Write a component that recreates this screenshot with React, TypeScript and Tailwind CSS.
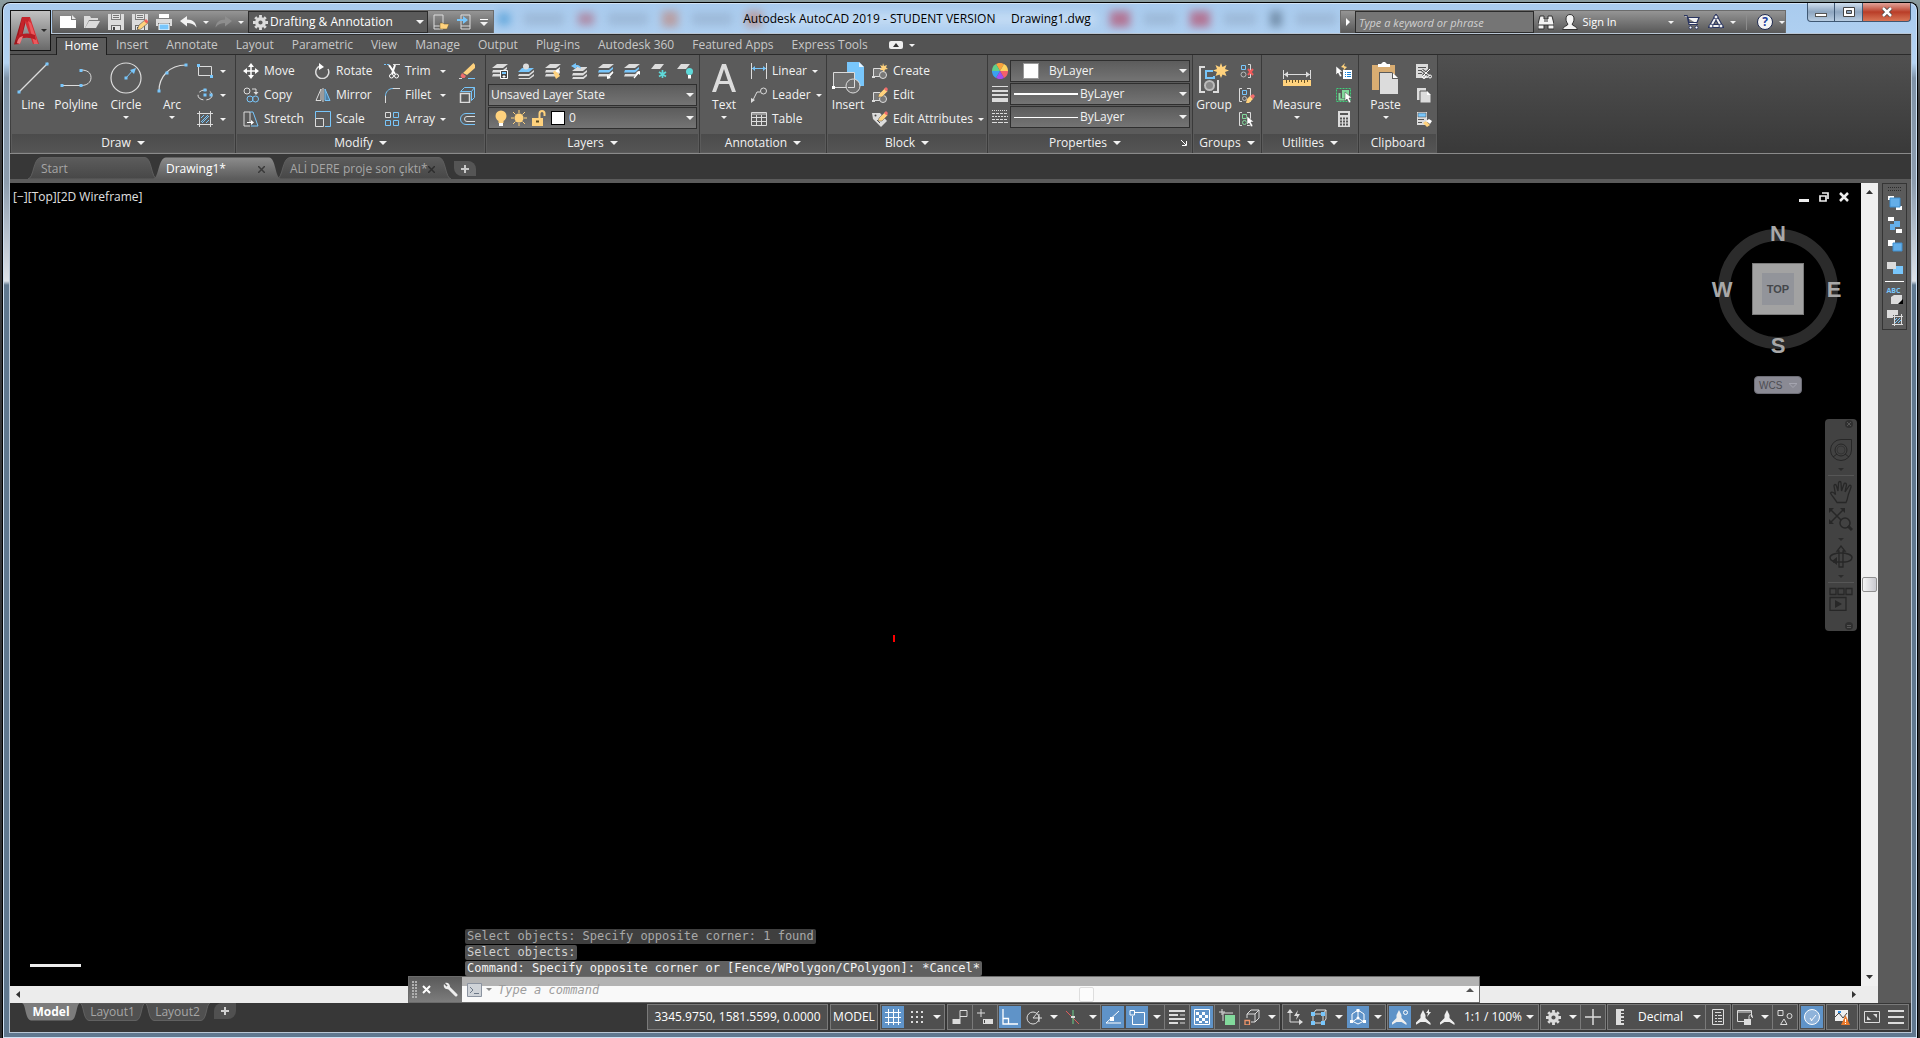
import { FC, ReactNode } from "react";

interface IconProps {
  w?: number;
  h?: number;
  children: ReactNode;
}

const Icon: FC<IconProps> = ({ w = 16, h = w, children }) => (
  <svg
    width={w}
    height={h}
    viewBox={`0 0 ${w} ${h}`}
    fill="none"
    className="shrink-0"
    aria-hidden="true"
  >
    {children}
  </svg>
);

const W = "#dcdcdc";
const B = "#78c6fb";
const Y = "#ffd27d";
const G = "#82d99c";

const Caret: FC<{ big?: boolean; dark?: boolean }> = ({ big, dark }) => (
  <svg
    width={big ? 8 : 6}
    height={big ? 4 : 3}
    viewBox="0 0 8 4"
    className="shrink-0"
    aria-hidden="true"
  >
    <path d="M0 0h8L4 4z" fill={dark ? "#2b2b2b" : "#f2f2f2"} />
  </svg>
);

/* ---------- quick access icons ---------- */

const NewIcon = () => (
  <Icon>
    <path d="M0 2h11v4h5v8H0z" fill="#fff" />
    <path d="M12 1l4 4h-4z" fill="#e8e8e8" />
  </Icon>
);

const OpenIcon = () => (
  <Icon>
    <path d="M0 14V2h6l1 2h7v2H5L1 14z" fill={W} />
    <path d="M5 7h11l-4 7H1z" fill={W} />
  </Icon>
);

const SaveIcon: FC<{ pen?: boolean }> = ({ pen }) => (
  <Icon>
    <path d="M0 0h3v6h10V0h3v16h-3v-5H3v5H0z" fill={W} />
    <path d="M4 0h8v5H4zM4 12h8v4H4z" fill="#e4e4e4" />
    <path d="M5 1.500h6M5 3.500h6" stroke="#777" />
    <path d="M5 13h2v3H5z" fill="#444" />
    {pen && (
      <>
        <path d="M5 16l2-5 6-5 3 3-7 6z" fill={Y} stroke="#555" strokeWidth=".6" />
        <path d="M12 7l2-2 2.500 2.500-2 2z" fill="#f0605a" />
      </>
    )}
  </Icon>
);

const PrintIcon = () => (
  <Icon>
    <path d="M3 0h10v4H3z" fill="#fff" />
    <path d="M0 5h16v7h-2V9H2v3H0z" fill={W} />
    <path d="M3 10h10v6H3z" fill={B} stroke="#fff" />
  </Icon>
);

const UndoIcon: FC<{ redo?: boolean }> = ({ redo }) => (
  <Icon w={17} h={12}>
    <g
      fill={redo ? "#8e8e8e" : "#f2f2f2"}
      transform={redo ? "matrix(-1 0 0 1 17 0)" : undefined}
    >
      <path d="M0 5l7-5v3.500c6 0 9 3 9.500 8C14 8 11 7 7 7v3.500z" />
    </g>
  </Icon>
);

const GearIcon: FC<{ size?: number }> = ({ size = 15 }) => (
  <svg width={size} height={size} viewBox="-8 -8 16 16" aria-hidden="true">
    <circle r="4" fill="none" stroke={W} strokeWidth="3.500" />
    <path
      d="M0-8v3M0 8V5M-8 0h3M8 0H5M-5.600-5.600l2 2M5.600 5.600l-2-2M-5.600 5.600l2-2M5.600-5.600l-2 2"
      stroke={W}
      strokeWidth="3"
    />
  </svg>
);

const MobileOpenIcon = () => (
  <Icon>
    <path d="M1 1h9v14H1z" stroke={W} />
    <path d="M1 12h9" stroke={W} />
    <path d="M7 15V9h3l1 1h5l-2 5z" fill={Y} stroke="#6a5a30" strokeWidth=".5" />
  </Icon>
);

const MobileShareIcon = () => (
  <Icon>
    <path d="M4 1h9v14H4z" stroke={W} />
    <path d="M4 12h9" stroke={W} />
    <path d="M0 5h6V2l5 4-5 4V7H0z" fill={B} />
  </Icon>
);

/* ---------- draw ---------- */

const Dot: FC<{ x: number; y: number }> = ({ x, y }) => (
  <rect x={x - 1.5} y={y - 1.5} width="3" height="3" fill={B} />
);

const LineIcon = () => (
  <Icon w={32}>
    <path d="M2 30L31 1" stroke={W} strokeWidth="1.200" />
    <Dot x={2} y={30} />
    <Dot x={30} y={2} />
  </Icon>
);

const PolylineIcon = () => (
  <Icon w={32}>
    <path d="M2 23.500h19c6 0 10-3 10-8s-4-7.500-10-7.500" stroke={W} />
    <Dot x={2} y={23.5} />
    <Dot x={21} y={23.5} />
    <Dot x={21} y={8.5} />
  </Icon>
);

const CircleIcon = () => (
  <Icon w={32}>
    <circle cx="16" cy="16" r="15" stroke={W} strokeWidth="1.200" />
    <path d="M16 16l8-9" stroke={B} />
    <path d="M26 6l-6 2 4 4z" fill={B} />
    <Dot x={16} y={16} />
  </Icon>
);

const ArcIcon = () => (
  <Icon w={32}>
    <path d="M3 29C3 15 13 3 30 3" stroke={W} strokeWidth="1.200" />
    <Dot x={3} y={29} />
    <Dot x={11} y={11} />
    <Dot x={30} y={3} />
  </Icon>
);

const RectIcon = () => (
  <Icon>
    <path d="M1.500 3.500h13v9h-13z" stroke={W} />
    <Dot x={1.5} y={2.5} />
    <Dot x={14.5} y={13.5} />
  </Icon>
);

const EllipseIcon = () => (
  <Icon>
    <ellipse cx="8" cy="8" rx="7" ry="5" stroke={W} strokeDasharray="8 3" />
    <Dot x={8} y={8} />
    <Dot x={14} y={8} />
    <Dot x={8} y={3} />
  </Icon>
);

const HatchIcon = () => (
  <Icon>
    <path d="M2.500 0v16M13.500 0v16M0 2.500h16M0 13.500h16" stroke={W} />
    <path d="M4 7l3-3M4 11l7-7M5 12l7-7M9 12l3-3" stroke={B} />
  </Icon>
);

/* ---------- modify ---------- */

const MoveIcon = () => (
  <Icon>
    <path d="M8 2v12M2 8h12" stroke="#fff" strokeWidth="1.500" />
    <path d="M8 0l3 4H5zM8 16l3-4H5zM0 8l4-3v6zM16 8l-4-3v6z" fill="#fff" />
  </Icon>
);

const CopyIcon = () => (
  <Icon>
    <circle cx="4" cy="4" r="3" stroke={W} />
    <path d="M9 2h4v4" stroke={W} />
    <path d="M13 8l-2.500-3h5z" fill={W} />
    <circle cx="7" cy="12" r="3" stroke={B} />
    <circle cx="12.500" cy="12" r="3" stroke={B} />
  </Icon>
);

const StretchIcon = () => (
  <Icon>
    <path d="M7 11V1H1v14h6" stroke={W} />
    <path d="M7 1h3l5 14H8" stroke={B} />
    <path d="M4 11.500h6" stroke="#fff" />
    <path d="M11 11.500L8 9v5z" fill="#fff" />
  </Icon>
);

const RotateIcon = () => (
  <Icon>
    <path d="M5 3a6.500 6.500 0 1 0 8 3" stroke={W} strokeWidth="1.500" />
    <path d="M4 0l5 4-5 3z" fill="#fff" />
  </Icon>
);

const MirrorIcon = () => (
  <Icon>
    <path d="M6 2v11.500H1z" stroke={W} />
    <path d="M10 2v11.500h5z" stroke={B} fill="#4d7fa5" />
    <path d="M8 1v14" stroke={W} />
  </Icon>
);

const ScaleIcon = () => (
  <Icon>
    <path d="M.500 7V.500h15v15H10" stroke={B} />
    <path d="M.500 7.500h8v8h-8z" stroke={W} />
  </Icon>
);

const TrimIcon = () => (
  <Icon>
    <path d="M0 1.500h6" stroke={B} strokeDasharray="2 1" />
    <path d="M9 1.500h7" stroke={W} />
    <path d="M5 2l6 9M11 2l-3 9" stroke="#fff" strokeWidth="2" />
    <circle cx="7.500" cy="13" r="2" stroke="#fff" />
    <circle cx="12.500" cy="13" r="2" stroke="#fff" />
  </Icon>
);

const FilletIcon = () => (
  <Icon>
    <path d="M9 1.500h7M1.500 9v7" stroke={W} />
    <path d="M1.500 9c0-4 3-7.500 7.500-7.500" stroke={B} />
  </Icon>
);

const ArrayIcon = () => (
  <Icon>
    <path d="M1.500 1.500h5v5h-5z" stroke={W} />
    <path d="M9.500 1.500h5v5h-5zM1.500 9.500h5v5h-5zM9.500 9.500h5v5h-5z" stroke={B} />
  </Icon>
);

const EraseIcon = () => (
  <Icon>
    <path d="M14.500 0l1.500 2v3l-8 7-4-2z" fill={Y} />
    <path d="M3 10l4 3-1.500 2H3l-1.500-2z" fill="#f26d6d" />
    <path d="M9 15.500h7" stroke={B} />
    <path d="M0 15.500h3" stroke={W} />
  </Icon>
);

const ExplodeIcon = () => (
  <Icon>
    <path d="M1.500 6.500h9v9h-9z" stroke={W} strokeWidth="1.500" />
    <path d="M1.500 4.500l4-4h10v10l-3 3M1.500 4.500h11l3-4M12.500 4.500v9" stroke={B} />
  </Icon>
);

const OffsetIcon = () => (
  <Icon>
    <path d="M16 2.500H7a5.500 5.500 0 0 0 0 11h9" stroke={B} />
    <path d="M16 5.500H8a2.500 2.500 0 0 0 0 5h8" stroke={W} />
  </Icon>
);

/* ---------- layers ---------- */

const Stack: FC<{ top?: string; mid?: string }> = ({ top = W, mid = W }) => (
  <>
    <path d="M5 1h11l-5 4H0z" fill={top} />
    <path d="M1 7h10l4-3v2l-4 3.500H0z" fill={mid} />
    <path d="M1 11h10l4-3v2l-4 3.500H0z" fill={W} />
  </>
);

const LayerPropsIcon = () => (
  <Icon>
    <Stack />
    <path d="M8.500 7.500h7v8h-7z" fill="#444" stroke="#fff" />
    <path d="M10 9h4v2h-4z" fill={B} />
    <path d="M12 12v3M10.500 13.500h3" stroke="#fff" />
  </Icon>
);

const LayerMakeIcon = () => (
  <Icon>
    <path d="M4 5h12l-5 4H0z" fill={B} />
    <path d="M1 11h10l5-4v2l-5 4H0zM1 15h10l5-4v2l-5 3.500H0z" fill={W} />
    <circle cx="8" cy="3.500" r="3" fill={W} />
  </Icon>
);

const LayerMatchIcon = () => (
  <Icon>
    <Stack />
    <path d="M8 9l3-2 4 6-4 3z" fill={Y} />
    <path d="M10 8l3-2 2 2-2 2z" fill="#fff" />
  </Icon>
);

const LayerPrevIcon = () => (
  <Icon>
    <g transform="translate(1 3)">
      <Stack />
    </g>
    <path d="M0 3l5-3v2c4 0 5 2 5 4-1-1.500-3-2-5-2v2z" fill={B} />
  </Icon>
);

const LayerArrowIcon: FC<{ up?: boolean }> = ({ up }) => (
  <Icon>
    <Stack mid={B} />
    <path d="M15 9l-5 6" stroke="#fff" strokeWidth="1.200" />
    <path d={up ? "M16 8v4l-4-3z" : "M9 16v-4l4 3z"} fill="#fff" />
  </Icon>
);

const LayerFreezeIcon = () => (
  <Icon>
    <path d="M4 1h9L9 6H0z" fill={W} />
    <path d="M11.500 7v8M8 9l7 4.500M15 9l-7 4.500" stroke="#5fd9d9" strokeWidth="1.700" />
  </Icon>
);

const LayerOffIcon = () => (
  <Icon>
    <path d="M4 1h9L9 6H0z" fill={W} />
    <circle cx="12.500" cy="8.500" r="3.500" fill="#5fd9d9" />
    <path d="M11 12h3v3.500h-3z" fill="#fff" />
  </Icon>
);

const BulbIcon = () => (
  <Icon w={12} h={16}>
    <circle cx="6" cy="6" r="5.500" fill={Y} />
    <path d="M3.500 11h5v2h-5z" fill={Y} />
    <path d="M4 13h4v3H4z" fill="#fff" />
  </Icon>
);

const SunIcon = () => (
  <Icon>
    <circle cx="8" cy="8" r="4.500" fill={Y} />
    <path
      d="M8 0v3M8 13v3M0 8h3M13 8h3M2 2l2.500 2.500M14 14l-2.500-2.500M2 14l2.500-2.500M14 2l-2.500 2.500"
      stroke={Y}
    />
  </Icon>
);

const UnlockIcon = () => (
  <Icon>
    <path d="M1 8h11v8H1z" fill={Y} />
    <path d="M8.500 8V3.500a2.500 2.500 0 0 1 5 0V6" stroke={Y} strokeWidth="2" />
    <path d="M5 10.500h3v2H5z" fill="#5b4a20" />
  </Icon>
);

/* ---------- annotation, block ---------- */

const LinearIcon = () => (
  <Icon>
    <path d="M.500 0v16M15.500 0v16" stroke={W} />
    <path d="M1 5.500h14" stroke={B} />
    <path d="M1 5.500L4 3v5zM15 5.500L12 3v5z" fill={B} />
  </Icon>
);

const LeaderIcon = () => (
  <Icon>
    <circle cx="12.500" cy="4" r="3" stroke={W} />
    <path d="M9 5H6L2 13" stroke={W} />
    <path d="M0 16v-5l4 2z" fill={W} />
  </Icon>
);

const TableIcon = () => (
  <Icon>
    <path d="M.500 1.500h15v13H.500z" stroke={W} />
    <path d="M0 3h16M0 6.500h16M0 10.500h16M5.500 4v11M10.500 4v11" stroke={W} />
  </Icon>
);

const InsertIcon = () => (
  <Icon w={32}>
    <path d="M15 0h12l5 5v19H15z" fill={B} />
    <path d="M27 0l5 5h-5z" fill="#e6f4ff" />
    <path d="M1.500 10.500h21v15h-21z" fill="#6e6e6e" stroke={W} />
    <circle cx="21" cy="24" r="7" fill="#6e6e6e" stroke={W} />
    <path d="M22.500 18v7.500H16" stroke={W} />
    <path d="M0 24h3v3H0z" fill="#fff" />
  </Icon>
);

const Pencil = () => (
  <>
    <path d="M6 10l1-3 6-6 3 3-6 6z" fill={Y} stroke="#5b5b5b" strokeWidth=".5" />
    <path d="M12 2l2-2 2 2-1.500 2.500z" fill="#f26d6d" />
  </>
);

const BlockBase = () => (
  <>
    <path d="M1.500 5.500h10v8h-10z" fill="#777" stroke={W} />
    <circle cx="11" cy="12" r="3.500" fill="#777" stroke={W} />
    <path d="M0 13h3v2H0z" fill={W} />
  </>
);

const BlockCreateIcon = () => (
  <Icon>
    <BlockBase />
    <path d="M11 0l1 3 3-1-1 2.500 2 1.500-3 .500-1 2.500-1.500-2L8 7l1.500-2.500L8 2l2.500 1z" fill={Y} />
  </Icon>
);

const BlockEditIcon = () => (
  <Icon>
    <BlockBase />
    <Pencil />
  </Icon>
);

const AttrEditIcon = () => (
  <Icon>
    <path d="M0 2h8l7 8-6 6-8-8z" fill={W} />
    <circle cx="3.500" cy="4.500" r="1" fill="#444" />
    <path d="M5 9l3 3" stroke="#555" />
    <Pencil />
  </Icon>
);

/* ---------- properties ---------- */

const ColorWheelIcon = () => (
  <svg width="16" height="16" viewBox="-8 -8 16 16" aria-hidden="true">
    <path d="M0 0L-4-7a8 8 0 0 1 8 0z" fill="#f9a13c" />
    <path d="M0 0L4-7a8 8 0 0 1 4 7z" fill="#ffd25e" />
    <path d="M0 0h8a8 8 0 0 1-4 7z" fill="#f4606c" />
    <path d="M0 0l4 7a8 8 0 0 1-8 0z" fill="#a14df0" />
    <path d="M0 0l-4 7a8 8 0 0 1-4-7z" fill="#3aa0f0" />
    <path d="M0 0h-8a8 8 0 0 1 4-7z" fill="#5fd08b" />
  </svg>
);

const LineWeightIcon = () => (
  <Icon>
    <path d="M0 0h16v1H0zM0 4h16v2H0zM0 8h16v2H0zM0 12h16v4H0z" fill={W} />
  </Icon>
);

const LineTypeIcon = () => (
  <Icon>
    <path d="M0 1.500h16" stroke={W} strokeDasharray="1 1" />
    <path d="M0 4.500h16M0 10.500h16" stroke={W} strokeDasharray="3 1" />
    <path d="M0 7.500h16" stroke={W} strokeDasharray="2 1" />
    <path d="M0 13.500h16" stroke={W} strokeDasharray="5 1" />
  </Icon>
);

/* ---------- groups, utilities, clipboard ---------- */

const GroupIcon = () => (
  <Icon w={32}>
    <path d="M7 5H2v25h5M15 30h5V18" stroke={W} strokeWidth="2" />
    <path d="M15 9H8v7h8v-2" stroke={B} strokeWidth="2" />
    <circle cx="11.500" cy="23.500" r="4.500" fill="#888" stroke="#bbb" strokeWidth="2" />
    <path
      d="M23 1l1.500 4 4-2-1.500 4 4 1.500-4 1.500 1.500 4-4-1.500L23 16l-1.500-3.500-4 1.500 1.500-4-4-1.500 4-1.500-1.500-4 4 2z"
      fill={Y}
    />
  </Icon>
);

const GroupBase: FC<{ color?: string }> = ({ color = B }) => (
  <>
    <path d="M3 1.500H.500v13H3M8 1.500h3.500v13H8" stroke={W} />
    <path d="M3.500 3.500h4v4h-4z" stroke={color} />
    <circle cx="5.500" cy="11.500" r="2" stroke={color === G ? G : "#bbb"} />
  </>
);

const UngroupIcon = () => (
  <Icon>
    <path d="M9 1.500h2.500v13H9" stroke={W} />
    <path d="M2.500 2.500h4v4h-4z" stroke={B} />
    <circle cx="4.500" cy="11.500" r="2.500" stroke="#bbb" />
    <path d="M9 6l5 6M14 6l-5 6" stroke="#f05a5a" strokeWidth="2" />
  </Icon>
);

const GroupEditIcon = () => (
  <Icon>
    <GroupBase />
    <path d="M7 16l1-4 3-3 3 3-4 4z" fill={Y} />
    <path d="M11 9l3-2 2 2-2 3z" fill="#f26d6d" />
  </Icon>
);

const Pointer: FC<{ x: number; y: number }> = ({ x, y }) => (
  <path
    d="M0 0v9l2-2 2 4 2-1-2-4h3z"
    transform={`translate(${x} ${y})`}
    fill="#fff"
    stroke="#444"
    strokeWidth=".5"
  />
);

const GroupSelectIcon = () => (
  <Icon>
    <GroupBase color={G} />
    <Pointer x={8} y={5} />
  </Icon>
);

const MeasureIcon = () => (
  <Icon w={32}>
    <path d="M2.500 8v9M29.500 8v9M3 12.500h26" stroke={W} />
    <path d="M3 12.500l4-3v6zM29 12.500l-4-3v6z" fill={W} />
    <path d="M2 18h28v6H2z" fill={Y} />
    <path
      d="M5.500 18v3M8.500 18v2M11.500 18v3M14.500 18v2M17.500 18v3M20.500 18v2M23.500 18v3M26.500 18v2"
      stroke="#6a5426"
    />
  </Icon>
);

const QuickSelectIcon = () => (
  <Icon>
    <path d="M9 0L5 4l3 1-1 3 4-4-3-1z" fill={Y} />
    <path d="M7 7h9v9H7z" fill="#fff" />
    <path d="M9 9.500h1M11 9.500h4M9 11.500h1M11 11.500h4M9 13.500h1M11 13.500h4" stroke="#1b84d8" />
    <Pointer x={0} y={3} />
  </Icon>
);

const SelectAllIcon = () => (
  <Icon>
    <path d="M.500 1.500h14v13H.500z" stroke="#3fd07a" strokeDasharray="2 1" />
    <path d="M3.500 6v6.500h6" stroke={G} strokeWidth="2" />
    <path d="M6 3h7v8H6z" fill={G} />
    <Pointer x={9} y={5} />
  </Icon>
);

const CalcIcon = () => (
  <Icon>
    <path d="M2 0h12v16H2z" fill={W} />
    <path d="M4 2h8v2H4z" fill="#555" />
    <path d="M4 7.500h8M4 10.500h8M4 13.500h8" stroke="#555" strokeWidth="2" strokeDasharray="2 1" />
  </Icon>
);

const PasteIcon = () => (
  <Icon w={32}>
    <path d="M2 3h23v25H2z" fill="#d9ad72" />
    <path d="M8 2h3l2-2h2l2 2h3v3H8z" fill="#fff" />
    <path d="M9 10h13l6 6v16H9z" fill="#5b5b5b" />
    <path d="M10 11h12v6h6v15H10z" fill={W} />
    <path d="M23 11l5 5h-5z" fill="#fff" />
  </Icon>
);

const CutIcon = () => (
  <Icon>
    <path d="M0 1h12v14H0z" fill={W} />
    <path d="M2 4.500h8M2 7.500h5M2 10.500h4" stroke="#555" />
    <path d="M6 7l8 6M14 6l-7 7" stroke="#5b5b5b" strokeWidth="3" />
    <path d="M6 7l8 6M14 6l-7 7" stroke="#fff" />
    <circle cx="8" cy="14" r="1.500" stroke="#fff" />
    <circle cx="14" cy="13.500" r="1.500" stroke="#fff" />
  </Icon>
);

const CopyClipIcon = () => (
  <Icon>
    <path d="M1 1h9v12H1z" fill={W} />
    <path d="M4 4h7l4 4v8H4z" fill={W} stroke="#5b5b5b" />
    <path d="M11 4v4h4z" fill="#fff" />
  </Icon>
);

const MatchPropsIcon = () => (
  <Icon>
    <path d="M1 1h10v13H1z" fill={W} />
    <path d="M2 2h8v4H2z" fill={B} stroke="#444" strokeWidth=".5" />
    <path d="M2 8.500h6M2 11.500h4" stroke="#555" />
    <path d="M7 12l3-2 4 4-3 2z" fill={Y} />
    <path d="M10 10l3-2 3 2-2 3z" fill="#fff" />
  </Icon>
);

/* ---------- ribbon building blocks ---------- */

interface BigProps {
  icon: ReactNode;
  label: string;
  width: string;
  arrow?: boolean;
}

const BigButton: FC<BigProps> = ({ icon, label, width, arrow }) => (
  <button
    type="button"
    className={`flex h-full flex-col items-center pt-[7px] ${width}`}
  >
    {icon}
    <span className="mt-[3px] leading-4 whitespace-nowrap">{label}</span>
    {arrow && (
      <span className="flex h-2 items-center">
        <Caret />
      </span>
    )}
  </button>
);

interface SmallProps {
  icon: ReactNode;
  label?: string;
  name?: string;
  arrow?: boolean;
}

const SmallButton: FC<SmallProps> = ({ icon, label, name, arrow }) => (
  <button
    type="button"
    aria-label={label ? undefined : name}
    className="flex h-6 items-center gap-[5px] whitespace-nowrap"
  >
    {icon}
    {label}
    {arrow && (
      <span className="ml-auto">
        <Caret />
      </span>
    )}
  </button>
);

interface PanelProps {
  title: string;
  width: string;
  arrow?: boolean;
  launcher?: boolean;
  children: ReactNode;
}

const Panel: FC<PanelProps> = ({
  title,
  width,
  arrow = true,
  launcher,
  children,
}) => (
  <section
    className={`flex shrink-0 flex-col border-r border-r-[#3a3a3a] bg-[#5b5b5b] ${width}`}
  >
    <div className="flex h-[79px]">{children}</div>
    <div className="mx-px flex h-[18px] items-center bg-linear-to-b from-[#4b4b4b] to-[#545454]">
      <button type="button" className="flex flex-1 items-center justify-center gap-1.5">
        {title}
        {arrow && <Caret big />}
      </button>
      {launcher && (
        <button type="button" aria-label="Open palette" className="mr-1">
          <Icon w={6}>
            <path d="M0 0l5 5M5.500 1v4.500H1" stroke="#fff" />
          </Icon>
        </button>
      )}
    </div>
  </section>
);

interface ComboProps {
  label: string;
  value: string;
  pad: string;
  children?: ReactNode;
}

const Combo: FC<ComboProps> = ({ label, value, pad, children }) => (
  <div className="relative flex h-[22px] w-full items-center border border-[#2f2f2f] bg-linear-to-b from-[#5c5c5c] to-[#747474]">
    <div className="pointer-events-none absolute inset-y-0 left-0 flex items-center">
      {children}
    </div>
    <select
      aria-label={label}
      className={`h-full w-full appearance-none text-[#f2f2f2] ${pad}`}
    >
      <option>{value}</option>
    </select>
    <span className="pointer-events-none absolute right-[2px]">
      <Caret big />
    </span>
  </div>
);

/* ---------- title bar ---------- */

const AppButton = () => (
  <button
    type="button"
    aria-label="Application menu"
    className="absolute top-[7px] left-0 z-10 flex h-[41px] w-[41px] items-center justify-center gap-0.5 border border-[#151515] bg-linear-to-b from-[#c2c2c2] to-[#6a6a6a]"
  >
    <svg width="25" height="28" viewBox="0 0 25 28" aria-hidden="true">
      <path d="M8 0h5L6 27l-6 .500z" fill="#9c161c" />
      <path d="M10 0h6l9 27h-6L11 5z" fill="#d42f35" />
      <path d="M8 0h8l-2 5-3-1-5 22-3 1z" fill="#c4242a" />
      <path d="M14 4l3 2 7 21h-4z" fill="#ea5a5e" />
      <path d="M3 19c6-3 12-3 18-1l1 5c-6-3-12-3-20 0z" fill="#b51d24" />
      <path d="M3 26c1-4 2-6 6-7l-3 8z" fill="#ee7d80" />
    </svg>
    <Caret dark />
  </button>
);

const toolbar =
  "mt-[7px] flex h-[23px] items-center border border-b-0 border-[#6b6b6b] bg-linear-to-b from-[#959595] to-[#585858]";

const QuickAccess = () => (
  <div className={`${toolbar} ml-[42px] w-[442px] shrink-0 pl-[7px]`}>
    <div className="flex items-center gap-2">
      <button type="button" aria-label="New"><NewIcon /></button>
      <button type="button" aria-label="Open"><OpenIcon /></button>
      <button type="button" aria-label="Save"><SaveIcon /></button>
      <button type="button" aria-label="Save As"><SaveIcon pen /></button>
      <button type="button" aria-label="Plot"><PrintIcon /></button>
      <div className="flex items-center gap-1.5">
        <button type="button" aria-label="Undo"><UndoIcon /></button>
        <Caret />
        <button type="button" aria-label="Redo"><UndoIcon redo /></button>
        <Caret />
      </div>
    </div>
    <div className="relative ml-1 flex h-[22px] w-[180px] items-center border border-[#2b2b2b] bg-[#5a5a5a]">
      <span className="pointer-events-none absolute left-1">
        <GearIcon />
      </span>
      <select
        aria-label="Workspace"
        className="h-full w-full appearance-none pl-[21px] text-white"
      >
        <option>Drafting &amp; Annotation</option>
      </select>
      <span className="pointer-events-none absolute right-[3px]">
        <Caret big />
      </span>
    </div>
    <div className="flex flex-1 items-center justify-between px-[5px]">
      <button type="button" aria-label="Open from mobile"><MobileOpenIcon /></button>
      <button type="button" aria-label="Share to mobile"><MobileShareIcon /></button>
      <button
        type="button"
        aria-label="Customize"
        className="flex flex-col items-center gap-0.5"
      >
        <span className="h-px w-2 bg-white" />
        <Caret big />
      </button>
    </div>
  </div>
);

// colours of the windows that shine through the glass title bar
const Glass = () => (
  <div className="absolute inset-x-0 top-2 flex h-4 items-center justify-between px-1 opacity-50 blur-[4px]">
    <span className="h-3 w-3 bg-[#1d84c9]" />
    <span className="h-3 w-10 bg-[#8fa6c2]" />
    <span className="h-3 w-4 bg-[#b0475c]" />
    <span className="h-3 w-10 bg-[#8fa6c2]" />
    <span className="h-4 w-4 bg-[#c46f55]" />
    <span className="h-3 w-10 bg-[#8fa6c2]" />
    <span className="h-4 w-4 bg-[#c46f55]" />
    <span className="h-3 w-80 bg-[#dcebfa]" />
    <span className="h-4 w-5 bg-[#b81c3a]" />
    <span className="h-3 w-8 bg-[#8fa6c2]" />
    <span className="h-4 w-5 bg-[#b81c3a]" />
    <span className="h-3 w-8 bg-[#8fa6c2]" />
    <span className="h-4 w-3 bg-[#3d5368]" />
    <span className="h-3 w-10 bg-[#8fa6c2]" />
  </div>
);

const BinocularsIcon = () => (
  <Icon>
    <path d="M2 2h4v3h4V2h4l2 8v5h-6v-4H6v4H0v-5z" fill="#f4f4f4" stroke="#333" />
    <path d="M0 11h6M10 11h6M6 7h4" stroke="#333" />
  </Icon>
);

const UserIcon = () => (
  <Icon>
    <path
      d="M8 .500c3 0 4 2 4 4.500S11 9 10 10c0 2 5 2 5.500 5.500H.500C1 12 6 12 6 10 5 9 4 7.500 4 5S5 .500 8 .500z"
      fill="#f4f4f4"
      stroke="#333"
    />
  </Icon>
);

const CartIcon = () => (
  <Icon>
    <path d="M0 1.500h3l2 9h9M4 3.500h11l-2 5H5z" fill="#f4f4f4" stroke="#2a3560" strokeWidth="1.200" />
    <circle cx="6.500" cy="13.500" r="1.500" fill="#fff" stroke="#2a3560" />
    <circle cx="12.500" cy="13.500" r="1.500" fill="#fff" stroke="#2a3560" />
  </Icon>
);

const A360Icon = () => (
  <Icon>
    <path d="M8 3L3 12h10z" stroke="#2a3560" strokeWidth="4" />
    <path d="M8 3L3 12h10z" stroke="#f0f0f0" strokeWidth="2" />
    <circle cx="8" cy="3" r="2" fill="#f4f4f4" stroke="#2a3560" />
    <circle cx="3" cy="12" r="2" fill="#f4f4f4" stroke="#2a3560" />
    <circle cx="13" cy="12" r="2" fill="#f4f4f4" stroke="#2a3560" />
  </Icon>
);

const InfoCenter = () => (
  <div className={`${toolbar} w-[446px] shrink-0`}>
    <button type="button" aria-label="Collapse search" className="flex w-[14px] justify-center">
      <Icon w={4} h={8}>
        <path d="M0 0v8l4-4z" fill="#fff" />
      </Icon>
    </button>
    <input
      type="text"
      aria-label="Search"
      placeholder="Type a keyword or phrase"
      className="h-[22px] w-[180px] border border-[#2b2b2b] bg-[#757575] px-[3px] text-[11px] italic placeholder:text-[#d0d0d0]"
    />
    <button type="button" aria-label="Find" className="ml-1"><BinocularsIcon /></button>
    <button type="button" className="ml-2 flex w-28 items-center gap-1 text-[11px]">
      <UserIcon />
      Sign In
      <span className="ml-auto">
        <Caret />
      </span>
    </button>
    <button type="button" aria-label="App Store" className="ml-2.5"><CartIcon /></button>
    <button type="button" aria-label="Autodesk account" className="ml-2 flex items-center gap-1.5">
      <A360Icon />
      <Caret />
    </button>
    <span className="mx-2.5 h-4 w-px bg-[#8c8c8c]" />
    <button type="button" aria-label="Help" className="flex items-center gap-1.5">
      <span className="flex h-4 w-4 items-center justify-center rounded-full border border-[#1f2a50] bg-[#f4f4f4] text-[12px] leading-4 font-bold text-[#1c3f9e]">
        ?
      </span>
      <Caret />
    </button>
  </div>
);

const winButton =
  "flex h-[19px] items-center justify-center border border-t-0 border-[#3f5873]";

const TitleBar = () => (
  <header className="relative flex h-[31px] shrink-0 text-[12px]">
    <AppButton />
    <QuickAccess />
    <div className="relative flex min-w-0 flex-1 items-center justify-center overflow-hidden whitespace-pre text-black">
      <Glass />
      <span className="relative">
        Autodesk AutoCAD 2019 - STUDENT VERSION     Drawing1.dwg
      </span>
    </div>
    <InfoCenter />
    <div className="ml-[21px] flex shrink-0">
      <button
        type="button"
        aria-label="Minimize"
        className={`${winButton} w-7 rounded-bl bg-linear-to-b from-[#cfdfee] via-[#8ea6c0] to-[#b8cde2]`}
      >
        <span className="mt-1.5 h-1 w-3 border border-[#555] bg-white" />
      </button>
      <button
        type="button"
        aria-label="Maximize"
        className={`${winButton} w-7 border-l-0 bg-linear-to-b from-[#cfdfee] via-[#8ea6c0] to-[#b8cde2]`}
      >
        <Icon w={12} h={10}>
          <path d="M.500.500h11v9H.500z" fill="#fff" stroke="#444" />
          <path d="M3.500 3.500h5v3h-5z" fill="#8ea6c0" stroke="#444" />
        </Icon>
      </button>
      <button
        type="button"
        aria-label="Close"
        className={`${winButton} w-12 rounded-br border-l-0 bg-linear-to-b from-[#e0a39a] via-[#b93d28] to-[#d87556]`}
      >
        <Icon w={12} h={10}>
          <path d="M2 1l8 8M10 1L2 9" stroke="#444" strokeWidth="4" />
          <path d="M2 1l8 8M10 1L2 9" stroke="#fff" strokeWidth="2.500" />
        </Icon>
      </button>
    </div>
  </header>
);

/* ---------- ribbon ---------- */

const tabs = [
  "Insert",
  "Annotate",
  "Layout",
  "Parametric",
  "View",
  "Manage",
  "Output",
  "Plug-ins",
  "Autodesk 360",
  "Featured Apps",
  "Express Tools",
];

const RibbonTabs = () => (
  <nav className="flex h-[21px] shrink-0 items-end border-t border-b border-t-[#2b2b2b] border-b-[#2b2b2b] bg-[#535353] pl-[46px] text-[12px] text-[#c8c8c8]">
    <a
      href="#home"
      className="-mb-px flex h-[18px] w-[51px] items-center justify-center border border-b-0 border-[#1e1e1e] bg-[#5b5b5b] pb-0.5 text-white"
    >
      Home
    </a>
    {tabs.map((tab) => (
      <a
        key={tab}
        href="#ribbon"
        className="flex h-[18px] items-center px-[9px] whitespace-nowrap"
      >
        {tab}
      </a>
    ))}
    <button
      type="button"
      aria-label="Minimize ribbon"
      className="ml-3 flex h-[18px] items-center gap-1.5"
    >
      <span className="flex h-2 w-3.5 items-center justify-center rounded-xs bg-[#eee]">
        <svg width="6" height="4" viewBox="0 0 6 4" aria-hidden="true">
          <path d="M0 4l3-4 3 4z" fill="#333" />
        </svg>
      </span>
      <Caret />
    </button>
  </nav>
);

const Ribbon = () => (
  <div className="flex h-[99px] shrink-0 border-b border-b-[#8a8a8a] bg-linear-to-b from-[#505050] to-[#393939] pl-px text-[12px] text-[#f2f2f2]">
    <Panel title="Draw" width="w-[225px]">
      <BigButton icon={<LineIcon />} label="Line" width="w-11" />
      <BigButton icon={<PolylineIcon />} label="Polyline" width="w-[42px]" />
      <BigButton icon={<CircleIcon />} label="Circle" width="w-[58px]" arrow />
      <BigButton icon={<ArcIcon />} label="Arc" width="w-[34px]" arrow />
      <div className="ml-2 flex w-[29px] flex-col pt-1">
        <SmallButton icon={<RectIcon />} name="Rectangle" arrow />
        <SmallButton icon={<EllipseIcon />} name="Ellipse" arrow />
        <SmallButton icon={<HatchIcon />} name="Hatch" arrow />
      </div>
    </Panel>
    <Panel title="Modify" width="w-[250px]">
      <div className="grid h-min grid-cols-[72px_69px_62px_16px] pt-1 pl-[7px]">
        <SmallButton icon={<MoveIcon />} label="Move" />
        <SmallButton icon={<RotateIcon />} label="Rotate" />
        <SmallButton icon={<TrimIcon />} label="Trim" arrow />
        <div className="pl-[13px]">
          <SmallButton icon={<EraseIcon />} name="Erase" />
        </div>
        <SmallButton icon={<CopyIcon />} label="Copy" />
        <SmallButton icon={<MirrorIcon />} label="Mirror" />
        <SmallButton icon={<FilletIcon />} label="Fillet" arrow />
        <div className="pl-[13px]">
          <SmallButton icon={<ExplodeIcon />} name="Explode" />
        </div>
        <SmallButton icon={<StretchIcon />} label="Stretch" />
        <SmallButton icon={<ScaleIcon />} label="Scale" />
        <SmallButton icon={<ArrayIcon />} label="Array" arrow />
        <div className="pl-[13px]">
          <SmallButton icon={<OffsetIcon />} name="Offset" />
        </div>
      </div>
    </Panel>
    <Panel title="Layers" width="w-[214px]">
      <div className="flex w-full flex-col gap-px px-0.5 pt-1">
        <div className="flex justify-between px-1">
          <SmallButton icon={<LayerPropsIcon />} name="Layer properties" />
          <SmallButton icon={<LayerMakeIcon />} name="Make current" />
          <SmallButton icon={<LayerMatchIcon />} name="Match layer" />
          <SmallButton icon={<LayerPrevIcon />} name="Previous" />
          <SmallButton icon={<LayerArrowIcon />} name="Isolate" />
          <SmallButton icon={<LayerArrowIcon up />} name="Unisolate" />
          <SmallButton icon={<LayerFreezeIcon />} name="Freeze" />
          <SmallButton icon={<LayerOffIcon />} name="Off" />
        </div>
        <Combo label="Layer state" value="Unsaved Layer State" pad="pl-0.5" />
        <Combo label="Layer" value="0" pad="pl-20">
          <div className="flex items-center gap-1 pl-1.5">
            <BulbIcon />
            <SunIcon />
            <UnlockIcon />
            <span className="h-3.5 w-3.5 border border-black bg-white" />
          </div>
        </Combo>
      </div>
    </Panel>
    <Panel title="Annotation" width="w-[127px]">
      <BigButton
        icon={
          <Icon w={32}>
            <path
              fillRule="evenodd"
              d="M14 2h4l10 28h-4l-3-8H11l-3 8H4zm2 5l-4 12h8z"
              fill={W}
            />
          </Icon>
        }
        label="Text"
        width="w-12"
        arrow
      />
      <div className="ml-[3px] flex w-[67px] flex-col pt-1">
        <SmallButton icon={<LinearIcon />} label="Linear" arrow />
        <SmallButton icon={<LeaderIcon />} label="Leader" arrow />
        <SmallButton icon={<TableIcon />} label="Table" />
      </div>
    </Panel>
    <Panel title="Block" width="w-[161px]">
      <BigButton icon={<InsertIcon />} label="Insert" width="w-[42px]" />
      <div className="ml-[3px] flex w-[110px] flex-col pt-1">
        <SmallButton icon={<BlockCreateIcon />} label="Create" />
        <SmallButton icon={<BlockEditIcon />} label="Edit" />
        <SmallButton icon={<AttrEditIcon />} label="Edit Attributes" arrow />
      </div>
    </Panel>
    <Panel title="Properties" width="w-[205px]" launcher>
      <div className="grid w-full grid-cols-[16px_1fr] content-start items-center gap-x-0.5 gap-y-px pt-[5px] pr-0.5 pl-1">
        <ColorWheelIcon />
        <Combo label="Color" value="ByLayer" pad="pl-[38px]">
          <span className="ml-3 h-4 w-4 border border-[#999] bg-white" />
        </Combo>
        <LineWeightIcon />
        <Combo label="Lineweight" value="ByLayer" pad="pl-[69px]">
          <span className="ml-[3px] h-0.5 w-16 bg-white" />
        </Combo>
        <LineTypeIcon />
        <Combo label="Linetype" value="ByLayer" pad="pl-[69px]">
          <span className="ml-[3px] h-px w-16 bg-white" />
        </Combo>
      </div>
    </Panel>
    <Panel title="Groups" width="w-[69px]">
      <BigButton icon={<GroupIcon />} label="Group" width="w-[42px]" />
      <div className="ml-1 flex flex-col pt-1">
        <SmallButton icon={<UngroupIcon />} name="Ungroup" />
        <SmallButton icon={<GroupEditIcon />} name="Edit group" />
        <SmallButton icon={<GroupSelectIcon />} name="Group selection" />
      </div>
    </Panel>
    <Panel title="Utilities" width="w-[97px]">
      <BigButton icon={<MeasureIcon />} label="Measure" width="w-[70px]" arrow />
      <div className="ml-1 flex flex-col pt-1">
        <SmallButton icon={<QuickSelectIcon />} name="Quick select" />
        <SmallButton icon={<SelectAllIcon />} name="Select all" />
        <SmallButton icon={<CalcIcon />} name="Calculator" />
      </div>
    </Panel>
    <Panel title="Clipboard" width="w-[79px]" arrow={false}>
      <BigButton icon={<PasteIcon />} label="Paste" width="w-[53px]" arrow />
      <div className="ml-1 flex flex-col pt-1">
        <SmallButton icon={<CutIcon />} name="Cut" />
        <SmallButton icon={<CopyClipIcon />} name="Copy clip" />
        <SmallButton icon={<MatchPropsIcon />} name="Match properties" />
      </div>
    </Panel>
  </div>
);

/* ---------- drawing tabs ---------- */

interface FileTabProps {
  label: string;
  w: number;
  active?: boolean;
  closable?: boolean;
}

const FileTab: FC<FileTabProps> = ({ label, w, active, closable }) => (
  <button
    type="button"
    className={`relative -mr-1 flex h-[22px] items-center pt-0.5 pr-4 pl-[13px] ${
      active ? "z-10 text-white" : "text-[#a6a6a6]"
    }`}
    style={{ width: w }}
  >
    <svg
      width={w}
      height="22"
      viewBox={`0 0 ${w} 22`}
      className="absolute inset-0"
      aria-hidden="true"
    >
      <defs>
        <linearGradient id={active ? "tabOn" : "tabOff"} x1="0" y1="0" x2="0" y2="1">
          <stop offset="0" stopColor={active ? "#8c8c8c" : "#5c5c5c"} />
          <stop offset="1" stopColor={active ? "#5b5b5b" : "#474747"} />
        </linearGradient>
      </defs>
      <path
        d={`M0 22C6 21 5 1 13 .500H${w - 12}C${w - 5} 1 ${w - 6} 21 ${w} 22z`}
        fill={active ? "url(#tabOn)" : "url(#tabOff)"}
        stroke={active ? "none" : "#5f5f5f"}
      />
    </svg>
    <span className="relative whitespace-nowrap">{label}</span>
    {closable && (
      <span className="relative ml-auto">
        <Icon w={7}>
          <path d="M0 0l7 7M7 0L0 7" stroke={active ? "#3a3a3a" : "#2e2e2e"} strokeWidth="1.500" />
        </Icon>
      </span>
    )}
  </button>
);

const FileTabs = () => (
  <div className="flex h-[29px] shrink-0 items-start border-b-4 border-b-[#5b5b5b] bg-[#373737] pt-[3px] pl-[18px] text-[12px]">
    <FileTab label="Start" w={129} />
    <FileTab label="Drawing1*" w={128} active closable />
    <FileTab label="ALİ DERE proje son çıktı*" w={174} closable />
    <button
      type="button"
      aria-label="New drawing"
      className="mt-1 ml-[7px] flex h-[15px] w-[22px] items-center justify-center rounded-tr-lg rounded-bl-lg bg-[#555]"
    >
      <Icon w={8}>
        <path d="M4 0v8M0 4h8" stroke="#c8c8c8" strokeWidth="2" />
      </Icon>
    </button>
  </div>
);

/* ---------- viewport ---------- */

const ViewCube = () => (
  <svg
    width="136"
    height="136"
    viewBox="-68 -68 136 136"
    fontFamily="'Liberation Sans', Arial, sans-serif"
    fontWeight="bold"
    textAnchor="middle"
    className="overflow-visible"
  >
    <circle r="54" fill="none" stroke="#2b2b2b" strokeWidth="12" />
    <g fontSize="22" fill="#a8a8a8">
      <text x="0" y="-48">N</text>
      <text x="0" y="64">S</text>
      <text x="-56" y="8">W</text>
      <text x="56" y="8">E</text>
    </g>
    <rect x="-25.500" y="-25.500" width="51" height="51" fill="#a2a2a2" stroke="#7a7a7a" />
    <rect x="-16" y="-16" width="32" height="32" fill="#92949a" />
    <text x="0" y="4" fontSize="11" fill="#44474b">TOP</text>
  </svg>
);

const navButton = "flex w-full flex-col items-center";
const D = "#272727";

const NavBar = () => (
  <div className="flex h-[212px] w-8 flex-col items-center rounded bg-[#424242] py-px">
    <button type="button" aria-label="Close navigation bar" className="mr-1 self-end">
      <Icon w={8}>
        <circle cx="4" cy="4" r="4" fill="#2f2f2f" />
        <path d="M2 2l4 4M6 2L2 6" stroke="#555" />
      </Icon>
    </button>
    <button type="button" aria-label="Steering wheel" className={`${navButton} mt-2.5`}>
      <Icon w={24}>
        <path d="M12 1.500h10.500V12A10.500 10.500 0 1 1 12 1.500z" stroke={D} />
        <circle cx="12" cy="12" r="6" stroke={D} />
        <circle cx="12" cy="12" r="4" stroke={D} strokeWidth=".5" />
        <path d="M4 19l4-3M20 19l-4-3" stroke={D} />
      </Icon>
      <span className="mt-1.5"><Caret dark /></span>
    </button>
    <span className="mt-1 h-px w-[26px] bg-[#565656]" />
    <button type="button" aria-label="Pan" className={`${navButton} mt-1`}>
      <Icon w={24}>
        <path
          d="M8 22.500C6 19 3 16 1.500 13c1-1.500 3-1 5 1.500L5 6c0-2 2-2 2.500 0L9 11l.500-8c.500-2 2.500-2 2.500 0l.500 8L15 4c.500-1.500 2.500-1 2.500 1L16 12l4-6c1-1.500 2.500-.500 2 1-1 4-2.500 6-3 9-.500 3-1 4.500-2 6.500z"
          stroke={D}
          strokeWidth="1.300"
        />
      </Icon>
    </button>
    <button type="button" aria-label="Zoom extents" className={`${navButton} mt-1`}>
      <Icon w={24}>
        <path d="M1 1l14 14M15 1L1 15" stroke={D} strokeWidth="1.500" />
        <path d="M0 0h5L0 5zM16 0h-5l5 5zM0 16h5l-5-5z" fill={D} />
        <circle cx="16" cy="15" r="5" fill="#424242" stroke={D} strokeWidth="1.500" />
        <path d="M19 18l4 4" stroke={D} strokeWidth="3" />
      </Icon>
      <span className="mt-1.5"><Caret dark /></span>
    </button>
    <button type="button" aria-label="Orbit" className={`${navButton} mt-1`}>
      <Icon w={24}>
        <path d="M10 22V6H8l4-5 4 5h-2v16z" stroke={D} strokeWidth="1.300" />
        <path d="M8 17c-4 0-7-2-7-4.500S6 8 12 8s11 2 11 4.500-3 4.500-7 4.500H4" stroke={D} strokeWidth="1.500" />
        <path d="M3 16l5-4v8z" fill={D} />
      </Icon>
      <span className="mt-1.5"><Caret dark /></span>
    </button>
    <span className="mt-1 h-px w-[26px] bg-[#565656]" />
    <button type="button" aria-label="Show motion" className={`${navButton} mt-1`}>
      <Icon w={24}>
        <path d="M1 1.500h6v6H1zM9 1.500h6v6H9zM17 1.500h6v6h-6zM1 10.500h16v13H1z" stroke={D} strokeWidth="1.300" />
        <path d="M6 13l7 4-7 4z" fill={D} />
      </Icon>
    </button>
    <button type="button" aria-label="Options" className="mt-auto mr-1 self-end">
      <Icon w={8}>
        <circle cx="4" cy="4" r="4" fill="#2f2f2f" />
        <path d="M2 3.500h4M2 5.500h4" stroke="#555" />
      </Icon>
    </button>
  </div>
);

const historyLine =
  "w-fit rounded-xs px-0.5 font-['DejaVu_Sans_Mono','Liberation_Mono',monospace] text-[12px] leading-[15px] whitespace-nowrap";

const CommandLine = () => (
  <div className="absolute inset-x-[398px] bottom-0">
    <div className="ml-[57px] flex flex-col gap-px">
      <p className={`${historyLine} bg-[#3f3f3f] text-[#a9a9a9]`}>
        Select objects: Specify opposite corner: 1 found
      </p>
      <p className={`${historyLine} bg-[#505050] text-[#cfcfcf]`}>Select objects:</p>
      <p className={`${historyLine} bg-[#606060] text-[#f4f4f4]`}>
        Command: Specify opposite corner or [Fence/WPolygon/CPolygon]: *Cancel*
      </p>
    </div>
    <div className="flex h-[27px] border border-[#6b6b6b]">
      <div className="flex w-[53px] items-center justify-between bg-linear-to-b from-[#5a5a5a] to-[#7d7d7d] pr-1 pl-[3px]">
        <Icon w={5} h={17}>
          <path d="M1 0v17M4 0v17" stroke="#b0b0b0" strokeWidth="2" strokeDasharray="2 1" />
        </Icon>
        <div className="flex items-center gap-3">
          <button type="button" aria-label="Close command line">
            <Icon w={9}>
              <path d="M1 1l7 7M8 1L1 8" stroke="#fff" strokeWidth="2" />
            </Icon>
          </button>
          <button type="button" aria-label="Customize command line">
            <Icon w={15}>
              <path d="M5 5l8 8" stroke="#eee" strokeWidth="3" strokeLinecap="round" />
              <path d="M2 1l3 3-1 1-3-3c-1 3 1 6 5 5l1-2c0-3-2-5-5-4z" fill="#eee" />
            </Icon>
          </button>
        </div>
      </div>
      <div className="flex flex-1 items-center bg-white/70 px-[5px]">
        <Icon w={15} h={14}>
          <path d="M.500.500h14v13H.500z" fill="#cfd3d8" stroke="#8b93a0" />
          <path d="M3 4l3 3-3 3M7 10.500h5" stroke="#6c7888" />
        </Icon>
        <svg width="6" height="3" viewBox="0 0 8 4" className="ml-1" aria-hidden="true">
          <path d="M0 0h8L4 4z" fill="#8a8a8a" />
        </svg>
        <input
          type="text"
          aria-label="Command"
          placeholder="Type a command"
          className="ml-1.5 h-full flex-1 font-['DejaVu_Sans_Mono','Liberation_Mono',monospace] text-[12px] italic placeholder:text-[#9d9d9d]"
        />
        <Icon w={8} h={4}>
          <path d="M0 4h8L4 0z" fill="#555" />
        </Icon>
      </div>
    </div>
  </div>
);

const Viewport = () => (
  <div className="relative min-h-0 flex-1 bg-black text-[12px] text-[#e0e0e0]">
    <span className="absolute top-[5px] left-[3px]">[−][Top][2D Wireframe]</span>
    <div className="absolute top-[9px] right-3 flex items-center gap-2.5">
      <button type="button" aria-label="Minimize drawing">
        <Icon w={10}>
          <path d="M0 7h10v3H0z" fill="#eee" />
        </Icon>
      </button>
      <button type="button" aria-label="Restore drawing">
        <Icon w={10}>
          <path d="M3 1h6v6M1 4h6v5H1z" stroke="#eee" strokeWidth="1.700" />
        </Icon>
      </button>
      <button type="button" aria-label="Close drawing">
        <Icon w={10}>
          <path d="M1 1l8 8M9 1L1 9" stroke="#eee" strokeWidth="2.500" />
        </Icon>
      </button>
    </div>
    <div className="absolute top-[38px] right-[15px] flex flex-col items-center">
      <ViewCube />
      <button
        type="button"
        className="mt-[19px] flex h-[18px] w-12 items-center justify-between rounded border border-[#6d6d76] bg-[#8a8a94] px-1 font-['Liberation_Sans',Arial,sans-serif] text-[10px] text-[#4c4c52]"
      >
        WCS
        <Icon w={8} h={5}>
          <path d="M0 .500h8L4 4.500z" stroke="#a5a5b0" />
        </Icon>
      </button>
    </div>
    <div className="absolute top-[236px] right-1">
      <NavBar />
    </div>
    <span className="absolute top-[56.3%] left-[47.7%] h-[7px] w-0.5 bg-[#f00]" />
    <span className="absolute bottom-[19px] left-5 h-[3px] w-[51px] bg-[#eee]" />
  </div>
);

const VScroll = () => (
  <div className="flex w-[17px] shrink-0 flex-col items-center justify-between bg-[#f0f0f0] py-[7px]">
    <Icon w={7} h={4}>
      <path d="M0 4h7L3.500 0z" fill="#333" />
    </Icon>
    <span className="h-[15px] w-[15px] rounded-xs border border-[#8f8f8f] bg-linear-to-r from-[#f5f5f5] to-[#c9c9cf]" />
    <Icon w={7} h={4}>
      <path d="M0 0h7L3.500 4z" fill="#333" />
    </Icon>
  </div>
);

const HScroll = () => (
  <div className="flex h-[17px] shrink-0 items-center justify-between bg-[#ececec] pr-[22px] pl-1.5">
    <Icon w={4} h={7}>
      <path d="M4 0v7L0 3.500z" fill="#333" />
    </Icon>
    <span className="ml-[300px] h-[15px] w-[15px] rounded-xs border border-[#8f8f8f] bg-[#f5f5f5]" />
    <Icon w={4} h={7}>
      <path d="M0 0v7l4-3.500z" fill="#333" />
    </Icon>
  </div>
);

const OrderTools = () => (
  <aside className="w-[33px] shrink-0 bg-[#5b5b5b] pl-1">
    <div className="flex h-[147px] w-[25px] flex-col items-center border border-[#353535]">
      <Icon w={14} h={9}>
        <path d="M0 3.500h14M0 6.500h14" stroke="#2b2b2b" strokeDasharray="1 1" />
      </Icon>
      <button type="button" aria-label="Bring to front" className="mt-0.5">
        <Icon>
          <path d="M1 1h6v4H1zM9 11h6v4H9z" fill="#fff" />
          <path d="M3 3h10v9H3z" fill="#64aee8" stroke="#3f8fcf" />
        </Icon>
      </button>
      <button type="button" aria-label="Bring above" className="mt-1.5">
        <Icon>
          <path d="M1 0h6v4H1zM9 12h6v4H9z" fill="#fff" />
          <path d="M3 7h4V4h6v6H8v3H3z" fill="#64aee8" />
        </Icon>
      </button>
      <button type="button" aria-label="Send to back" className="mt-1.5">
        <Icon>
          <path d="M1 1h7v6H1z" fill="#fff" />
          <path d="M6 4h9v8H6z" fill="#64aee8" stroke="#3f8fcf" />
        </Icon>
      </button>
      <button type="button" aria-label="Send under" className="mt-1.5">
        <Icon>
          <path d="M6 5h10v8H6z" fill={B} />
          <path d="M0 1h9v7H0z" fill={W} />
        </Icon>
      </button>
      <span className="mt-1 h-px w-[19px] shrink-0 bg-white" />
      <button type="button" aria-label="Text to front" className="relative mt-1.5">
        <span className="absolute -top-0.5 left-0 text-[7px] leading-[9px] font-bold text-[#78c6fb]">
          ABC
        </span>
        <Icon>
          <path d="M4 9l3-2h8v9H4z" fill={W} />
          <path d="M16 11v5h-5z" fill="#000" />
        </Icon>
      </button>
      <button type="button" aria-label="Hatch to back" className="mt-1.5">
        <Icon>
          <path d="M0 0h11v8H0z" fill={W} />
          <path d="M6 5h10v11H6z" fill="#5b5b5b" />
          <path d="M7.500 5v11M14.500 4v11M5 14.500h11M6 6.500h10" stroke={W} />
          <path d="M8 13l5-5M8 10l2-2M11 13l3-3" stroke={B} />
        </Icon>
      </button>
    </div>
  </aside>
);

/* ---------- status bar ---------- */

interface CellProps {
  name: string;
  on?: boolean;
  sep?: boolean;
  children: ReactNode;
}

const Cell: FC<CellProps> = ({ name, on, sep, children }) => (
  <div className={`flex h-full shrink-0 items-center ${sep ? "border-l border-[#7a7a7a]" : ""}`}>
    <button
      type="button"
      aria-label={name}
      className={`mx-px flex h-[22px] w-[22px] items-center justify-center ${
        on ? "bg-[#5f93c8]" : ""
      }`}
    >
      {children}
    </button>
  </div>
);

const Drop = () => (
  <button type="button" aria-label="More options" className="flex w-[15px] shrink-0 items-center justify-center">
    <Caret big />
  </button>
);

const Group: FC<{ children: ReactNode }> = ({ children }) => (
  <div className="flex h-[26px] shrink-0 items-center border border-[#7a7a7a] bg-[#4f4f4f] whitespace-nowrap">
    {children}
  </div>
);

interface SheetTabProps {
  label: string;
  w: number;
  active?: boolean;
}

const SheetTab: FC<SheetTabProps> = ({ label, w, active }) => (
  <button
    type="button"
    className={`relative flex h-[18px] items-center justify-center ${
      active ? "font-bold text-white" : "text-[#a6a6a6]"
    }`}
    style={{ width: w }}
  >
    <svg
      width={w}
      height="18"
      viewBox={`0 0 ${w} 18`}
      className="absolute inset-0"
      aria-hidden="true"
    >
      <path
        d={`M0 0C4 1 3 17 9 17.500H${w - 9}C${w - 3} 17 ${w - 4} 1 ${w} 0z`}
        fill={active ? "#7c7c7c" : "#505050"}
        stroke={active ? "none" : "#616161"}
      />
    </svg>
    <span className="relative">{label}</span>
  </button>
);

const CrossMan: FC<{ extra?: ReactNode }> = ({ extra }) => (
  <Icon>
    <path d="M7 1l2.500 5v3l5 5v2l-5-3H4.500l-5 3v-2l5-5V6z" fill="#eee" />
    {extra}
  </Icon>
);

const bolt = <path d="M13 0l-3 4h2l-1 4 4-5h-2z" fill="#eee" />;

const StatusBar = () => (
  <footer className="flex h-[29px] shrink-0 justify-between bg-[#373737] pr-0.5 text-[12px] text-white">
    <div className="flex items-start pl-3">
      <SheetTab label="Model" w={58} active />
      <SheetTab label="Layout1" w={65} />
      <SheetTab label="Layout2" w={65} />
      <button
        type="button"
        aria-label="New layout"
        className="ml-1 flex h-4 w-[22px] items-center justify-center rounded-tl-lg rounded-br-lg bg-[#505050]"
      >
        <Icon w={8}>
          <path d="M4 0v8M0 4h8" stroke="#d0d0d0" strokeWidth="2" />
        </Icon>
      </button>
    </div>
    <div className="flex gap-px pt-px">
      <div className="flex gap-0.5">
        <Group>
          <span className="w-[179px] text-center">3345.9750, 1581.5599, 0.0000</span>
        </Group>
        <Group>
          <button type="button" className="w-[46px]">MODEL</button>
        </Group>
        <Group>
          <Cell name="Grid" on>
            <Icon>
              <path d="M3.500 0v16M8.500 0v16M13.500 0v16M0 3.500h16M0 8.500h16M0 13.500h16" stroke="#fff" />
            </Icon>
          </Cell>
          <Cell name="Snap">
            <Icon w={12}>
              <path d="M0 1h12M0 6h12M0 11h12" stroke={W} strokeWidth="2" strokeDasharray="2 3" />
            </Icon>
          </Cell>
          <Drop />
        </Group>
        <Group>
          <Cell name="Infer constraints">
            <Icon>
              <path d="M.500 10h8v5h-8z" fill={W} />
              <path d="M8 10V1.500h7v6H8" stroke={W} />
            </Icon>
          </Cell>
          <Cell name="Dynamic input" sep>
            <Icon>
              <path d="M4 0v8M0 4h8" stroke={W} />
              <path d="M6 10h10v5H6z" fill={W} />
              <path d="M7.500 11v3" stroke="#444" />
            </Icon>
          </Cell>
          <Cell name="Ortho" on sep>
            <Icon>
              <path d="M1 0v15h15M1 9.500h5.500V15" stroke="#fff" strokeWidth="1.300" />
            </Icon>
          </Cell>
          <Cell name="Polar tracking">
            <Icon>
              <circle cx="7" cy="9" r="6" stroke={W} />
              <path d="M7 9h9M7 9l6-7M13 5v8" stroke={W} />
            </Icon>
          </Cell>
          <Drop />
          <Cell name="Isometric drafting">
            <Icon>
              <path d="M1 2l13 13" stroke="#e05a5a" />
              <path d="M8 1v14" stroke="#6cd08b" />
              <path d="M6 8h4" stroke={W} strokeWidth="2" />
            </Icon>
          </Cell>
          <Drop />
          <Cell name="Object snap tracking" on sep>
            <Icon>
              <path d="M14 2L1 14h15" stroke="#fff" />
              <path d="M5 8h4v4H5z" fill="#fff" />
            </Icon>
          </Cell>
          <Cell name="Object snap" on>
            <Icon>
              <path d="M6 3.500h9.500v12h-12V7" stroke="#fff" />
              <path d="M1 1.500h4.500v4.500H1z" stroke="#fff" />
            </Icon>
          </Cell>
          <Drop />
          <Cell name="Lineweight" sep>
            <Icon>
              <path d="M0 2h16M0 6h9M0 10h16M0 14h9" stroke={W} strokeWidth="2" />
              <path d="M11 6h5M11 14h5" stroke={W} />
            </Icon>
          </Cell>
          <Cell name="Transparency" on sep>
            <Icon>
              <path d="M.500.500h15v15H.500z" stroke="#fff" />
              <path
                d="M2 3h3v3H2zM8 3h3v3H8zM5 6h3v3H5zM11 6h3v3h-3zM2 9h3v3H2zM8 9h3v3H8zM5 12h3v2H5zM11 12h3v2h-3z"
                fill="#fff"
              />
            </Icon>
          </Cell>
          <Cell name="Selection cycling" sep>
            <Icon>
              <path d="M3 0v6M0 3h6M4 12V4h10" stroke={W} />
              <path d="M6 6h10v10H6z" fill={G} />
            </Icon>
          </Cell>
          <Cell name="3D object snap" sep>
            <Icon>
              <path d="M3 9V5l4-4h8v8l-4 4H7M3 5h8l4-4M11 5v8" stroke={W} />
              <path d="M1 11.500h4.500V16H1z" stroke="#f0956a" strokeWidth="1.300" />
            </Icon>
          </Cell>
          <Drop />
        </Group>
        <Group>
          <Cell name="Dynamic UCS">
            <Icon>
              <path d="M3 2v11h12" stroke={W} />
              <path d="M3 0L0 4h6zM16 13l-4-3v6z" fill={W} />
              <path d="M11 1l-4 6h3l-1 4 4-6h-3z" fill={W} />
            </Icon>
          </Cell>
          <Cell name="Selection filtering">
            <Icon>
              <path d="M2 5l3-4h10v9l-3 4M2 5h10v9H2zM12 5l3-4" stroke={W} />
              <path d="M0 3h4v4H0zM10 3h4v4h-4zM0 12h4v4H0zM10 12h4v4h-4z" fill={B} />
            </Icon>
          </Cell>
          <Drop />
          <Cell name="Gizmo" on>
            <Icon>
              <path d="M8 1l6 4v7l-6 3-6-3V5zM8 1v8l6 4M8 9l-6 4" stroke="#fff" />
              <circle cx="8" cy="9" r="1.500" fill="#fff" />
              <path d="M0 11h3v3H0zM13 11h3v3h-3zM6.500 0h3v3h-3z" fill="#fff" />
            </Icon>
          </Cell>
          <Drop />
        </Group>
      </div>
      <Group>
        <Cell name="Annotation visibility" on>
          <CrossMan extra={<circle cx="13.500" cy="3.500" r="2" stroke="#fff" />} />
        </Cell>
        <Cell name="Autoscale">
          <CrossMan extra={bolt} />
        </Cell>
        <Cell name="Annotation scale">
          <CrossMan />
        </Cell>
        <div className="relative flex w-[78px] items-center">
          <select aria-label="Scale" className="w-full appearance-none pl-1">
            <option>1:1 / 100%</option>
          </select>
          <span className="pointer-events-none absolute right-1">
            <Caret big />
          </span>
        </div>
      </Group>
      <Group>
        <Cell name="Workspace switching">
          <GearIcon />
        </Cell>
        <Drop />
        <Cell name="Annotation monitor" sep>
          <Icon>
            <path d="M8 0v16M0 8h16" stroke={W} strokeWidth="1.500" />
          </Icon>
        </Cell>
      </Group>
      <Group>
        <Cell name="Units">
          <Icon>
            <path d="M4 0h8v2H9v2h3v1H9v2h3v2H9v2h3v1H9v2h3v2H4z" fill={W} />
          </Icon>
        </Cell>
        <div className="relative flex w-[73px] items-center">
          <select aria-label="Drawing units" className="w-full appearance-none pl-1.5">
            <option>Decimal</option>
          </select>
          <span className="pointer-events-none absolute right-1">
            <Caret big />
          </span>
        </div>
        <Cell name="Quick properties" sep>
          <Icon>
            <path d="M2.500.500h11v15h-11z" stroke={W} />
            <path d="M5 3.500h6M5 6.500h2M8 6.500h4M5 9.500h2M8 9.500h4M5 12.500h2M8 12.500h4" stroke={W} />
          </Icon>
        </Cell>
      </Group>
      <Group>
        <Cell name="Lock UI">
          <Icon>
            <path d="M7 12.500H.500v-11h14V8M1 3h13" stroke={W} />
            <path d="M7 10h7v6H7z" fill={W} />
            <path d="M12 10V7.500a1.700 1.700 0 0 1 3.400 0V9" stroke={W} />
          </Icon>
        </Cell>
        <Drop />
        <Cell name="Isolate objects" sep>
          <Icon>
            <path d="M1 1.500h5v5H1zM7 15.500H3.500L7 10l3 5.500z" stroke={W} />
            <circle cx="12.500" cy="7" r="2.500" stroke={W} />
          </Icon>
        </Cell>
      </Group>
      <Group>
        <Cell name="Hardware acceleration" on>
          <Icon>
            <circle cx="8" cy="8" r="7.500" fill="#8fb3da" stroke="#fff" />
            <path d="M7 12l5-6M8 12l-2-3" stroke="#fff" />
          </Icon>
        </Cell>
      </Group>
      <Group>
        <div className="px-[3px]">
          <Cell name="Performance">
            <Icon>
              <path d="M1 1h13v11H1z" fill="#eee" />
              <path d="M1 8l4-4 4 5 4-5" stroke="#444" />
              <path d="M4 2h3v2H4z" fill="#2a8be0" />
              <path d="M11.500 6l4.500 10H7z" fill="#ea7a2c" />
              <path d="M11.500 10v3M11.500 14v1" stroke="#fff" />
            </Icon>
          </Cell>
        </div>
      </Group>
      <Group>
        <Cell name="Clean screen">
          <Icon>
            <path d="M.500 2.500h15v11H.500z" stroke={W} />
            <path d="M9 5h4v4zM3 7v4h4z" fill={W} />
          </Icon>
        </Cell>
        <Cell name="Customization">
          <Icon>
            <path d="M0 2h16M0 8h16M0 14h16" stroke={W} strokeWidth="2" />
          </Icon>
        </Cell>
      </Group>
    </div>
  </footer>
);

const App = () => (
  <div className="flex h-screen w-full flex-col overflow-hidden bg-linear-to-b from-[#8a9c9f] via-[#3b3b3d] via-10% to-[#2c2c2e] px-0.5 pt-0.5 font-['Open_Sans','Noto_Sans',sans-serif] text-white">
    <div className="flex min-h-0 flex-1 flex-col overflow-hidden rounded-t-lg border border-b-0 border-black bg-[linear-gradient(#a9cbee_0,#b4d3f2_60px,#7f93a8_75px,#8d9dae_180px,#dde2e8_278px,#60788f_282px,#60788f_100%)] pr-1.5 pb-1.5 pl-[7px] shadow-[inset_0_0_0_1px_#cfe2f5]">
      <TitleBar />
      <div className="flex min-h-0 flex-1 flex-col ring-1 ring-[#b9c6d4]">
        <RibbonTabs />
        <Ribbon />
        <FileTabs />
        <main className="flex min-h-0 flex-1">
          <div className="relative flex min-w-0 flex-1 flex-col">
            <div className="flex min-h-0 flex-1">
              <Viewport />
              <VScroll />
            </div>
            <HScroll />
            <CommandLine />
          </div>
          <OrderTools />
        </main>
        <StatusBar />
      </div>
    </div>
  </div>
);

export default App;
